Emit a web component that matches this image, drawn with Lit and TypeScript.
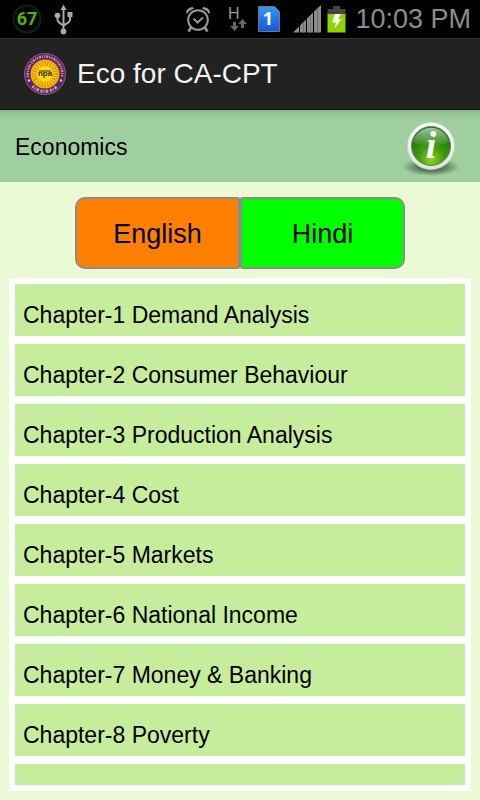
import { LitElement, html, css, svg } from "lit";
import { customElement, property, state } from "lit/decorators.js";
import { classMap } from "lit/directives/class-map.js";

const CHAPTERS = [
  "Chapter-1 Demand Analysis",
  "Chapter-2 Consumer Behaviour",
  "Chapter-3 Production Analysis",
  "Chapter-4 Cost",
  "Chapter-5 Markets",
  "Chapter-6 National Income",
  "Chapter-7 Money & Banking",
  "Chapter-8 Poverty",
  "",
];

@customElement("status-bar")
export class StatusBar extends LitElement {
  static styles = css`
    :host {
      display: flex;
      align-items: center;
      height: 38px;
      box-sizing: border-box;
      padding: 0 9px 0 12px;
      background: #000;
      color: #8c8c8c;
    }
    svg {
      display: block;
      flex: none;
    }
    .left,
    .right {
      display: flex;
      align-items: center;
    }
    .left {
      gap: 12px;
    }
    .right {
      margin-left: auto;
    }
    .alarm {
      margin-right: 18px;
    }
    .data {
      margin-right: 11px;
    }
    .sim {
      margin-right: 13px;
    }
    .signal {
      margin-right: 6px;
    }
    .battery {
      margin-right: 9px;
    }
    .percent {
      font: bold 18px Roboto, sans-serif;
      fill: #57b000;
    }
    .net {
      font: 16px "Liberation Sans", sans-serif;
      fill: #9a9a9a;
    }
    .slot {
      font: bold 18px "Noto Sans", sans-serif;
      fill: #fff;
    }
    time {
      font: 27px/38px "Liberation Sans", Arial, sans-serif;
      white-space: nowrap;
    }
  `;

  render() {
    return html`
      <div class="left">
        <svg width="30" height="32" viewBox="0 0 30 32" role="img" aria-label="Battery 67 percent">
          <circle cx="15" cy="16" r="13.5" fill="#020602" stroke="#0b2508" stroke-width="2" />
          <text class="percent" x="15" y="22" text-anchor="middle">67</text>
        </svg>
        <svg width="20" height="32" viewBox="0 0 20 32" role="img" aria-label="USB connected">
          <g fill="none" stroke="#a8a8a8" stroke-width="2">
            <path d="M9.5 5V28M3.500 13V17Q3.500 19 9.500 22.500M16 12V17Q16 19 9.500 22.500" />
          </g>
          <g fill="#a8a8a8">
            <path d="M9.500 1.500L12.500 7H6.500Z" />
            <circle cx="3.500" cy="12.500" r="2.800" />
            <rect x="13.500" y="9" width="5" height="5" />
            <circle cx="9.500" cy="28.500" r="2.900" />
          </g>
        </svg>
      </div>
      <div class="right">
        <svg class="alarm" width="26" height="28" viewBox="0 0 26 28" role="img" aria-label="Alarm set">
          <g fill="none" stroke="#989898">
            <circle cx="13" cy="15" r="9.800" stroke-width="2" />
            <path d="M8.500 13.500L12.500 17.500L18 12.500" stroke-width="2" />
            <path d="M6 22.500L3.500 26.500M20 22.500L22.500 26.500" stroke-width="2.500" />
          </g>
          <path d="M1 8Q1 3 7.500 2L9 3.500Q4.500 5 2.500 8.500ZM25 8Q25 3 18.500 2L17 3.500Q21.500 5 23.500 8.500Z" fill="#989898" />
        </svg>
        <svg class="data" width="18" height="30" viewBox="0 0 18 30" role="img" aria-label="Mobile data">
          <text class="net" x="-1" y="15">H</text>
          <g fill="#666">
            <path d="M4 18H7V22H10L5.500 27L1 22H4Z" />
            <path d="M12 24H15V20H18L13.500 15L9 20H12Z" />
          </g>
        </svg>
        <svg class="sim" width="22" height="26" viewBox="0 0 22 26" role="img" aria-label="SIM 1">
          <defs>
            <linearGradient id="sim" x1="0" y1="0" x2="0" y2="1">
              <stop offset="0" stop-color="#3398f5" />
              <stop offset="1" stop-color="#1057df" />
            </linearGradient>
          </defs>
          <path d="M.500 .500H16.500L21.500 5.500V25.500H.500Z" fill="url(#sim)" stroke="#777" />
          <text class="slot" x="10" y="19" text-anchor="middle">1</text>
        </svg>
        <svg class="signal" width="28" height="28" viewBox="0 0 28 28" role="img" aria-label="Signal strength">
          <path
            d="M0 27.500L6 21.500V27.500ZM7 27.500V20.500L13 14.500V27.500ZM14 27.500V13.500L20 7.500V27.500ZM21 27.500V6.500L28 0V27.500Z"
            fill="#8c8c8c"
          />
          <path d="M10.500 17V27.500M17.500 10V27.500M24.500 4V27.500" stroke="#707070" />
        </svg>
        <svg class="battery" width="19" height="28" viewBox="0 0 19 28" role="img" aria-label="Charging">
          <path d="M6 1H13V4H18.500V10H.500V4H6Z" fill="#444" />
          <rect x=".500" y="9" width="18" height="18.500" fill="#8fd400" />
          <path d="M8 9H14L11 14H14.500L7.500 23.500L9 17.500H5Z" fill="#fff" />
        </svg>
        <time datetime="22:03">10:03 PM</time>
      </div>
    `;
  }
}

@customElement("app-bar")
export class AppBar extends LitElement {
  @property() label = "";

  static styles = css`
    :host {
      display: flex;
      align-items: center;
      gap: 10px;
      height: 72px;
      box-sizing: border-box;
      padding: 0 23px;
      background: #222;
      border-top: 1px solid #303030;
      border-bottom: 1px solid #1a1a1a;
    }
    svg {
      display: block;
      flex: none;
    }
    h1 {
      margin: 0;
      font: 28px/40px "Liberation Sans", Arial, sans-serif;
      color: #f3f3f3;
      white-space: nowrap;
    }
    .monogram {
      font: bold 8px "Liberation Sans", sans-serif;
      fill: #3a2040;
    }
  `;

  render() {
    const rays = Array.from({ length: 24 }, (_, i) => i * 15);
    return html`
      <svg width="44" height="44" viewBox="0 0 44 44" role="img" aria-label="Institute seal">
        <defs>
          <radialGradient id="sun">
            <stop offset="0" stop-color="#ffe61e" />
            <stop offset=".6" stop-color="#ffd500" />
            <stop offset="1" stop-color="#f0a800" />
          </radialGradient>
        </defs>
        <circle cx="22" cy="22" r="20.500" fill="#5d2179" stroke="#8d7494" stroke-width=".800" />
        <path
          d="M5 25A17.300 17.300 0 1 1 39 25"
          fill="none"
          stroke="#c99a70"
          stroke-width="2.400"
          stroke-dasharray="1.300 1 2 .800 1 1.200"
        />
        <path
          d="M9.500 34A17.300 17.300 0 0 0 34.500 34"
          fill="none"
          stroke="#c9a27c"
          stroke-width="3"
          stroke-dasharray="2.200 1 1 1 2.500 1.600"
        />
        <circle cx="6" cy="28.500" r="1.200" fill="#f0d070" />
        <circle cx="38" cy="28.500" r="1.200" fill="#f0d070" />
        <circle cx="22" cy="22" r="14.500" fill="url(#sun)" />
        ${rays.map(
          (a) => svg`<path d="M22 14V9" stroke="#c98208" stroke-width=".900" transform="rotate(${a} 22 22)" />`,
        )}
        <text class="monogram" x="22" y="24" text-anchor="middle">npa</text>
        <path d="M16 19H28" stroke="#3a2040" stroke-width="1" />
      </svg>
      <h1>${this.label}</h1>
    `;
  }
}

@customElement("app-root")
export class AppRoot extends LitElement {
  @state() private language = "English";

  static styles = css`
    :host {
      display: flex;
      flex-direction: column;
      height: 100vh;
      overflow: hidden;
      background: #ebfad5;
      color: #000;
      font-family: "Liberation Sans", Arial, sans-serif;
    }
    status-bar,
    app-bar,
    .subject,
    .languages {
      flex: none;
    }
    .subject {
      display: flex;
      align-items: center;
      justify-content: space-between;
      height: 72px;
      box-sizing: border-box;
      padding: 2px 19px 0 15px;
      background: linear-gradient(#87b287, #98c598 3px, #9fcf9f 12px);
    }
    h2 {
      margin: 0;
      font-size: 23px;
      line-height: 32px;
      font-weight: normal;
    }
    button {
      font-family: inherit;
      color: inherit;
      cursor: pointer;
    }
    .info {
      display: block;
      padding: 0;
      border: 0;
      background: none;
    }
    .info svg {
      display: block;
    }
    .glyph {
      font: italic bold 38px "Liberation Serif", serif;
      fill: #fff;
    }
    .languages {
      display: flex;
      justify-content: center;
      padding: 15px 16px 9px;
    }
    .language {
      width: 165px;
      height: 72px;
      padding: 2px 0 0;
      border: 2px solid #8c8c8c;
      background: #0f0;
      font-size: 27px;
      line-height: 32px;
    }
    .language:first-child {
      border-radius: 10px 2px 2px 10px;
    }
    .language:last-child {
      border-radius: 2px 10px 10px 2px;
    }
    .language.selected {
      background: #ff8000;
    }
    .chapters {
      flex: 1;
      min-height: 0;
      display: flex;
      flex-direction: column;
      gap: 8px;
      margin: 0 9px 9px;
      padding: 0;
      border: 6px solid #fff;
      background: #fff;
      overflow: hidden;
      list-style: none;
    }
    li {
      flex: none;
    }
    .chapter {
      display: block;
      height: 52px;
      box-sizing: border-box;
      padding: 15px 8px 5px;
      background: #c6ed9c;
      color: inherit;
      font-size: 23px;
      line-height: 32px;
      text-decoration: none;
      white-space: nowrap;
    }
  `;

  render() {
    return html`
      <status-bar></status-bar>
      <app-bar label="Eco for CA-CPT"></app-bar>
      <header class="subject">
        <h2>Economics</h2>
        <button class="info" aria-label="Information">
          <svg width="60" height="60" viewBox="0 0 60 60" aria-hidden="true">
            <defs>
              <radialGradient id="ball" cx=".5" cy=".85" r=".75">
                <stop offset="0" stop-color="#8fd41e" />
                <stop offset=".45" stop-color="#3f9a10" />
                <stop offset="1" stop-color="#1a6f10" />
              </radialGradient>
              <linearGradient id="rim" x1="0" y1="0" x2="0" y2="1">
                <stop offset="0" stop-color="#fff" />
                <stop offset="1" stop-color="#dfe5df" />
              </linearGradient>
              <linearGradient id="gloss" x1="0" y1="0" x2="0" y2="1">
                <stop offset="0" stop-color="#fff" stop-opacity=".6" />
                <stop offset="1" stop-color="#fff" stop-opacity="0" />
              </linearGradient>
              <radialGradient id="shade">
                <stop offset="0" stop-color="#1f3a1f" stop-opacity=".9" />
                <stop offset=".5" stop-color="#2f4f2f" stop-opacity=".6" />
                <stop offset="1" stop-color="#2f4f2f" stop-opacity="0" />
              </radialGradient>
            </defs>
            <ellipse cx="30" cy="50" rx="29" ry="9" fill="url(#shade)" />
            <circle cx="30" cy="29" r="23.500" fill="url(#rim)" stroke="#c5d6c5" stroke-width=".800" />
            <circle cx="30" cy="29" r="19.500" fill="url(#ball)" stroke="#5c8a58" />
            <path d="M12 25A18.500 18.500 0 0 1 48 25Q30 34 12 25Z" fill="url(#gloss)" />
            <text class="glyph" x="30" y="41" text-anchor="middle">i</text>
          </svg>
        </button>
      </header>
      <div class="languages" role="group" aria-label="Language">
        ${["English", "Hindi"].map(
          (name) => html`<button
            class=${classMap({ language: true, selected: name === this.language })}
            aria-pressed=${name === this.language}
            @click=${() => (this.language = name)}
          >
            ${name}
          </button>`,
        )}
      </div>
      <ul class="chapters">
        ${CHAPTERS.map((title, i) => html`<li><a class="chapter" href="#chapter-${i + 1}">${title}</a></li>`)}
      </ul>
    `;
  }
}
